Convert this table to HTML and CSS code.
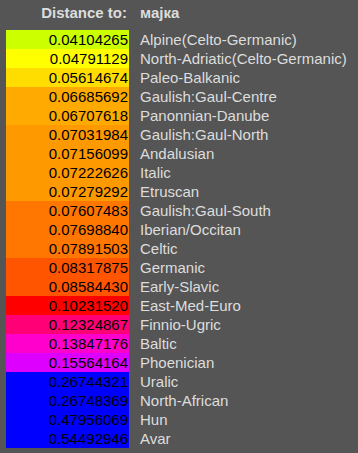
FILE: index.html
```html
<!DOCTYPE html>
<html>
<head>
<meta charset="utf-8">
<link rel="stylesheet" href="styles.css">
</head>
<body>
<div class="panel">
  <div class="head">
    <div class="hcell">Distance to:</div>
    <div class="hname">мајка</div>
  </div>
  <div class="rows">
    <div class="row"><div class="num c1">0.04104265</div><div class="name">Alpine(Celto-Germanic)</div></div>
    <div class="row"><div class="num c2">0.04791129</div><div class="name">North-Adriatic(Celto-Germanic)</div></div>
    <div class="row"><div class="num c3">0.05614674</div><div class="name">Paleo-Balkanic</div></div>
    <div class="row"><div class="num c4">0.06685692</div><div class="name">Gaulish:Gaul-Centre</div></div>
    <div class="row"><div class="num c4">0.06707618</div><div class="name">Panonnian-Danube</div></div>
    <div class="row"><div class="num c5">0.07031984</div><div class="name">Gaulish:Gaul-North</div></div>
    <div class="row"><div class="num c5">0.07156099</div><div class="name">Andalusian</div></div>
    <div class="row"><div class="num c5">0.07222626</div><div class="name">Italic</div></div>
    <div class="row"><div class="num c5">0.07279292</div><div class="name">Etruscan</div></div>
    <div class="row"><div class="num c6">0.07607483</div><div class="name">Gaulish:Gaul-South</div></div>
    <div class="row"><div class="num c6">0.07698840</div><div class="name">Iberian/Occitan</div></div>
    <div class="row"><div class="num c6">0.07891503</div><div class="name">Celtic</div></div>
    <div class="row"><div class="num c7">0.08317875</div><div class="name">Germanic</div></div>
    <div class="row"><div class="num c7">0.08584430</div><div class="name">Early-Slavic</div></div>
    <div class="row"><div class="num c8">0.10231520</div><div class="name">East-Med-Euro</div></div>
    <div class="row"><div class="num c9">0.12324867</div><div class="name">Finnio-Ugric</div></div>
    <div class="row"><div class="num c10">0.13847176</div><div class="name">Baltic</div></div>
    <div class="row"><div class="num c11">0.15564164</div><div class="name">Phoenician</div></div>
    <div class="row"><div class="num c12">0.26744321</div><div class="name">Uralic</div></div>
    <div class="row"><div class="num c12">0.26748369</div><div class="name">North-African</div></div>
    <div class="row"><div class="num c12">0.47956069</div><div class="name">Hun</div></div>
    <div class="row"><div class="num c12">0.54492946</div><div class="name">Avar</div></div>
  </div>
</div>
</body>
</html>
```

FILE: styles.css
```css
html, body {
  margin: 0;
  padding: 0;
  background: #555555;
}
body {
  font-family: "Liberation Sans", Arial, sans-serif;
  font-size: 15px;
  color: #dddddd;
}
.panel {
  padding-left: 6px;
}
.head {
  display: flex;
  height: 30px;
  padding-top: 3px;
  box-sizing: border-box;
  line-height: 19px;
  font-weight: bold;
}
.hcell {
  width: 121px;
  text-align: right;
}
.hname {
  margin-left: 13px;
}
.row {
  display: flex;
  height: 19px;
  line-height: 19px;
}
.num {
  width: 123px;
  box-sizing: border-box;
  padding-right: 1px;
  text-align: right;
  color: #000000;
}
.name {
  padding-left: 11px;
}
.c1 { background: #ccff00; }
.c2 { background: #ffff00; }
.c3 { background: #ffdd00; }
.c4 { background: #ffaa00; }
.c5 { background: #ff9900; }
.c6 { background: #ff7700; }
.c7 { background: #ff5500; }
.c8 { background: #ff0000; }
.c9 { background: #ff0077; }
.c10 { background: #ff00cc; }
.c11 { background: #dd00ff; }
.c12 { background: #0000ff; }
```
